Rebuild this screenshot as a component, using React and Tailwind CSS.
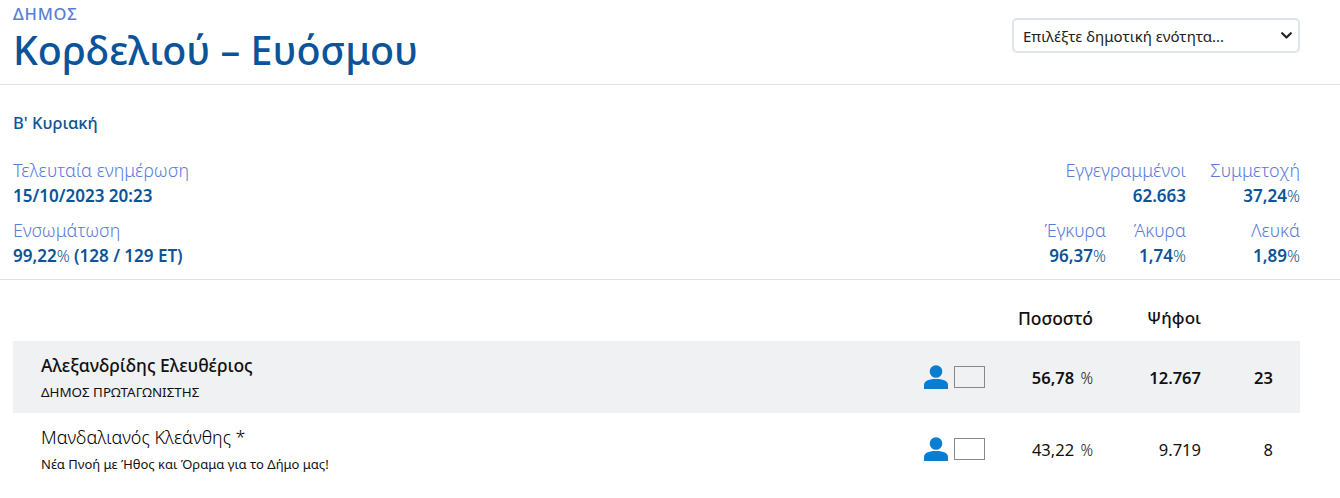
import React from 'react';

const font = { fontFamily: '"Noto Sans", sans-serif' };

function Stat({ label, value, pct, className = '' }) {
    return (
        <div className={`text-right ${className}`}>
            <div className="text-[18px] leading-[26px] font-light text-[#5b7cd8] whitespace-nowrap">{label}</div>
            <div className="text-[17px] leading-[26px] font-semibold text-[#0c5499] whitespace-nowrap">
                {value}{pct && <span className="text-[16px] font-light">%</span>}
            </div>
        </div>
    );
}

function PersonIcon() {
    return (
        <svg width="24" height="24" viewBox="0 0 24 24" className="fill-[#0b7dd1]">
            <circle cx="12" cy="6.500" r="6.300" />
            <path d="M0 24v-4C0 15.500 6 14 12 14s12 1.500 12 6v4z" />
        </svg>
    );
}

function CandidateRow({ name, party, pct, votes, seats, bold }) {
    return (
        <div className={`flex items-center h-[72px] text-[#111] ${bold ? 'bg-[#f0f1f3] font-semibold' : 'font-normal'}`}>
            <div className="flex-1 pl-[28px]">
                <div className={bold ? 'text-[17.500px] leading-[24px] -mt-[1px] font-medium' : 'text-[18px] leading-[24px] -mt-[1px] font-light text-black'}>{name}</div>
                <div className={`leading-[18px] mt-[6px] font-normal ${bold ? 'text-[13.400px]' : 'text-[13px]'}`}>{party}</div>
            </div>
            <PersonIcon />
            <div className="w-[31px] h-[22px] ml-[6px] border border-[#888] bg-transparent" />
            <div className="w-[108px] text-right text-[16.500px] pt-[2px]">
                {pct} <span className="ml-[2px] text-[15.500px] font-light">%</span>
            </div>
            <div className="w-[108px] text-right text-[16.500px] pt-[2px]">{votes}</div>
            <div className="w-[72px] text-right text-[16.500px] pt-[2px]">{seats}</div>
            <div className="w-[27px]" />
        </div>
    );
}

export default function App() {
    return (
        <div className="bg-white h-[498px] overflow-hidden" style={font}>
            <header className="flex justify-between h-[85px] border-b border-[#dfe3ea] pl-[13px] pr-[40px]">
                <div>
                    <div className="text-[16.500px] leading-[20px] mt-[4px] font-medium tracking-[0.8px] text-[#5b7cd8]">ΔΗΜΟΣ</div>
                    <h1 className="text-[39.400px] leading-[52px] font-medium text-[#0c5499]">Κορδελιού – Ευόσμου</h1>
                </div>
                <div className="mt-[18px] w-[288px] h-[35px] flex items-center justify-between border-2 border-[#dfe3ea] rounded-[5px] pl-[9px] pr-[6px] text-[15px] text-[#222]">
                    <span className="pt-[1px]">Επιλέξτε δημοτική ενότητα...</span>
                    <svg width="11" height="7" viewBox="0 0 11 7" fill="none" stroke="#222" strokeWidth="2.200" strokeLinecap="round" strokeLinejoin="round">
                        <path d="M1.200 1.200 5.500 5.500l4.300-4.300" />
                    </svg>
                </div>
            </header>

            <section className="h-[195px] border-b border-[#e2e2e2] pl-[13px] pr-[40px]">
                <div className="pt-[26px] text-[16.500px] leading-[24px] font-medium text-[#0c5499]">Β' Κυριακή</div>
                <div className="flex justify-between mt-[22px]">
                    <div>
                        <div className="text-[18px] leading-[26px] font-light text-[#5b7cd8]">Τελευταία ενημέρωση</div>
                        <div className="text-[17px] leading-[26px] font-semibold text-[#0c5499]">15/10/2023 20:23</div>
                        <div className="text-[18px] leading-[26px] font-light text-[#5b7cd8] mt-[8px]">Ενσωμάτωση</div>
                        <div className="text-[17px] leading-[26px] font-semibold text-[#0c5499]">
                            99,22<span className="text-[16px] font-light">%</span> (128 / 129 ΕΤ)
                        </div>
                    </div>
                    <div>
                        <div className="flex justify-end">
                            <Stat label="Εγγεγραμμένοι" value="62.663" />
                            <Stat label="Συμμετοχή" value="37,24" pct className="w-[114px]" />
                        </div>
                        <div className="flex justify-end mt-[8px]">
                            <Stat label="Έγκυρα" value="96,37" pct />
                            <Stat label="Άκυρα" value="1,74" pct className="w-[80px]" />
                            <Stat label="Λευκά" value="1,89" pct className="w-[114px]" />
                        </div>
                    </div>
                </div>
            </section>

            <div className="pl-[13px] pr-[40px]">
                <div className="flex justify-end items-center h-[61px] pt-[15px] text-[17px] font-medium text-[#111]">
                    <div className="text-right text-[17.500px]">Ποσοστό</div>
                    <div className="w-[108px] text-right">Ψήφοι</div>
                    <div className="w-[99px]" />
                </div>
                <CandidateRow name="Αλεξανδρίδης Ελευθέριος" party="ΔΗΜΟΣ ΠΡΩΤΑΓΩΝΙΣΤΗΣ" pct="56,78" votes="12.767" seats="23" bold />
                <CandidateRow name="Μανδαλιανός Κλεάνθης *" party="Νέα Πνοή με Ήθος και Όραμα για το Δήμο μας!" pct="43,22" votes="9.719" seats="8" />
            </div>
        </div>
    );
}
